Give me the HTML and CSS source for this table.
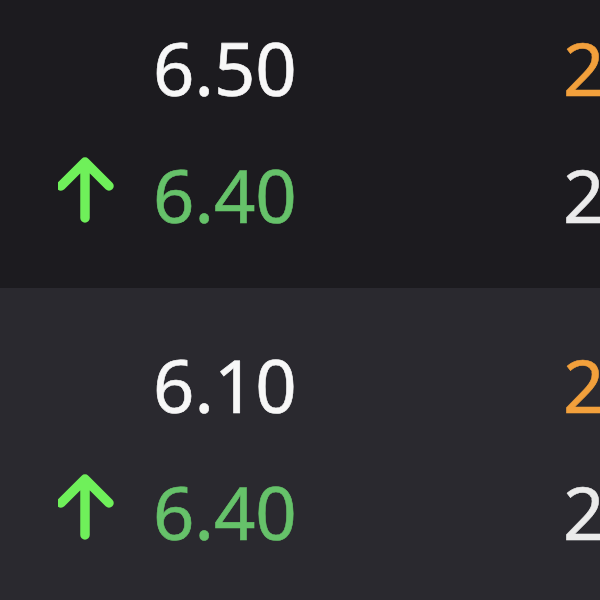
FILE: index.html
```html
<!DOCTYPE html>
<html>
<head>
<meta charset="utf-8">
<link rel="stylesheet" href="styles.css">
</head>
<body>
<div class="book">
  <section class="group group-a">
    <div class="row">
      <span class="mark"></span>
      <span class="price">6.50</span>
      <span class="size ask">2</span>
    </div>
    <div class="row">
      <span class="mark"><svg class="arrow" viewBox="0 0 60 66" width="60" height="66"><path d="M27 61 V5 M3 29 L27 5 L51 29" fill="none" stroke="#6ff05a" stroke-width="9.5" stroke-linecap="round" stroke-linejoin="round"/></svg></span>
      <span class="price up">6.40</span>
      <span class="size">2</span>
    </div>
  </section>
  <section class="group group-b">
    <div class="row">
      <span class="mark"></span>
      <span class="price">6.10</span>
      <span class="size ask">2</span>
    </div>
    <div class="row">
      <span class="mark"><svg class="arrow" viewBox="0 0 60 66" width="60" height="66"><path d="M27 61 V5 M3 29 L27 5 L51 29" fill="none" stroke="#6ff05a" stroke-width="9.5" stroke-linecap="round" stroke-linejoin="round"/></svg></span>
      <span class="price up">6.40</span>
      <span class="size">2</span>
    </div>
  </section>
</div>
</body>
</html>
```
FILE: styles.css
```css
html, body {
  margin: 0;
  padding: 0;
  background: #2a292f;
  overflow: hidden;
}
.book {
  margin-top: -29px;
  font-family: "Noto Sans", "Open Sans", sans-serif;
  font-size: 72.5px;
}
.group {
  padding: 33px 0 30px;
}
.group-a { background: #1c1b1f; }
.group-b { background: #2a292f; }
.row {
  display: grid;
  grid-template-columns: 58px 95px 410px 1fr;
  height: 127px;
  line-height: 127px;
  white-space: nowrap;
}
.mark {
  grid-column: 2;
  display: flex;
  align-items: flex-start;
  padding-top: 26px;
}
.price {
  grid-column: 3;
  color: #f7f7f7;
  -webkit-text-stroke: 0.6px currentColor;
}
.price.up { color: #66c26a; }
.size {
  grid-column: 4;
  color: #ebebeb;
  -webkit-text-stroke: 0.6px currentColor;
}
.size.ask { color: #f2a03c; }
.arrow { display: block; }
```
